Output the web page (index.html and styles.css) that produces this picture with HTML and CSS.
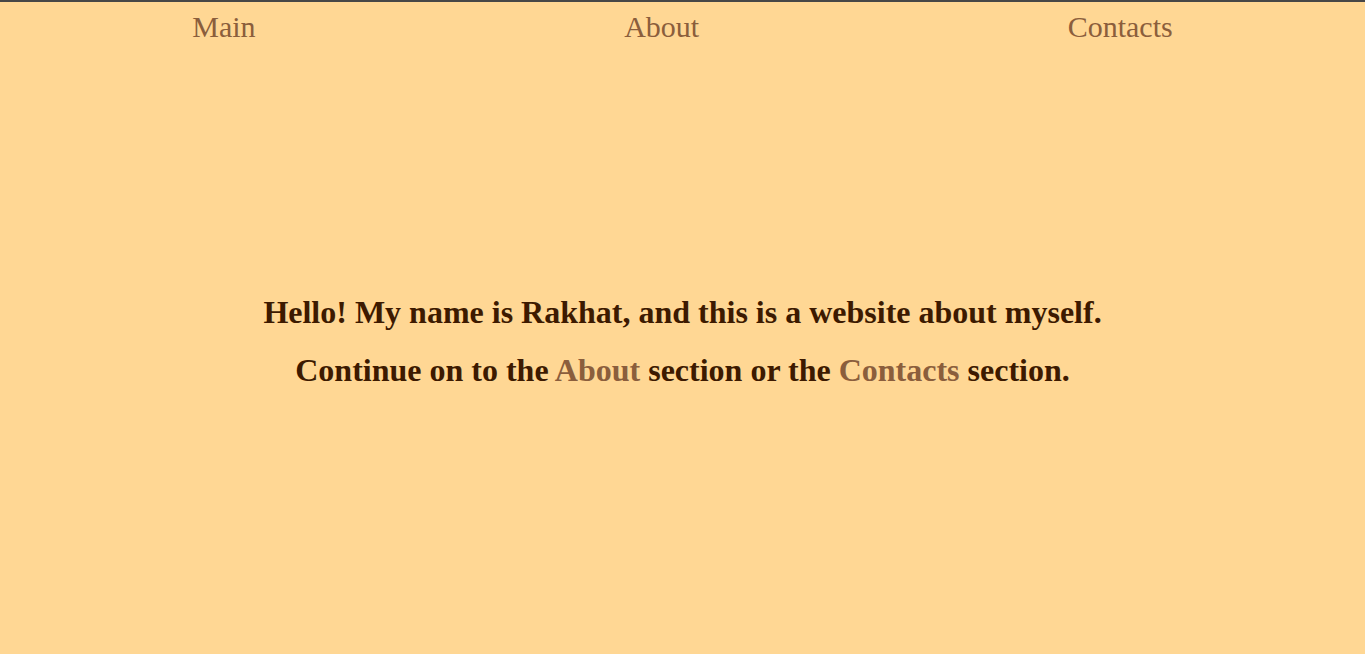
FILE: index.html
```html
<!DOCTYPE html>
<html lang="en">
<head>
<meta charset="utf-8">
<title>Rakhat</title>
<link rel="stylesheet" href="styles.css">
</head>
<body>
<nav class="nav">
  <a class="nav-link" href="#">Main</a>
  <a class="nav-link" href="#">About</a>
  <a class="nav-link" href="#">Contacts</a>
</nav>
<main class="hero">
  <h1 class="hero-line">Hello! My name is Rakhat, and this is a website about myself.</h1>
  <h1 class="hero-line">Continue on to the <a class="hero-link" href="#">About</a> section or the <a class="hero-link" href="#">Contacts</a> section.</h1>
</main>
</body>
</html>
```

FILE: styles.css
```css
html, body {
  margin: 0;
  padding: 0;
  height: 100%;
}
body {
  background: #ffd794;
  border-top: 2px solid #474747;
  box-sizing: border-box;
  font-family: "Liberation Serif", "Times New Roman", serif;
  overflow: hidden;
}
.nav {
  display: flex;
  justify-content: space-around;
  padding: 8px 8px 0;
}
.nav-link {
  font-size: 30px;
  line-height: 34px;
  color: #8b5e3c;
  text-decoration: none;
}
.hero {
  display: flex;
  flex-direction: column;
  align-items: center;
  padding-top: 250px;
  gap: 21px;
}
.hero-line {
  margin: 0;
  font-size: 32px;
  line-height: 37px;
  font-weight: bold;
  color: #3d1a00;
  text-align: center;
}
.hero-link {
  color: #8b5e3c;
  text-decoration: none;
}
```
